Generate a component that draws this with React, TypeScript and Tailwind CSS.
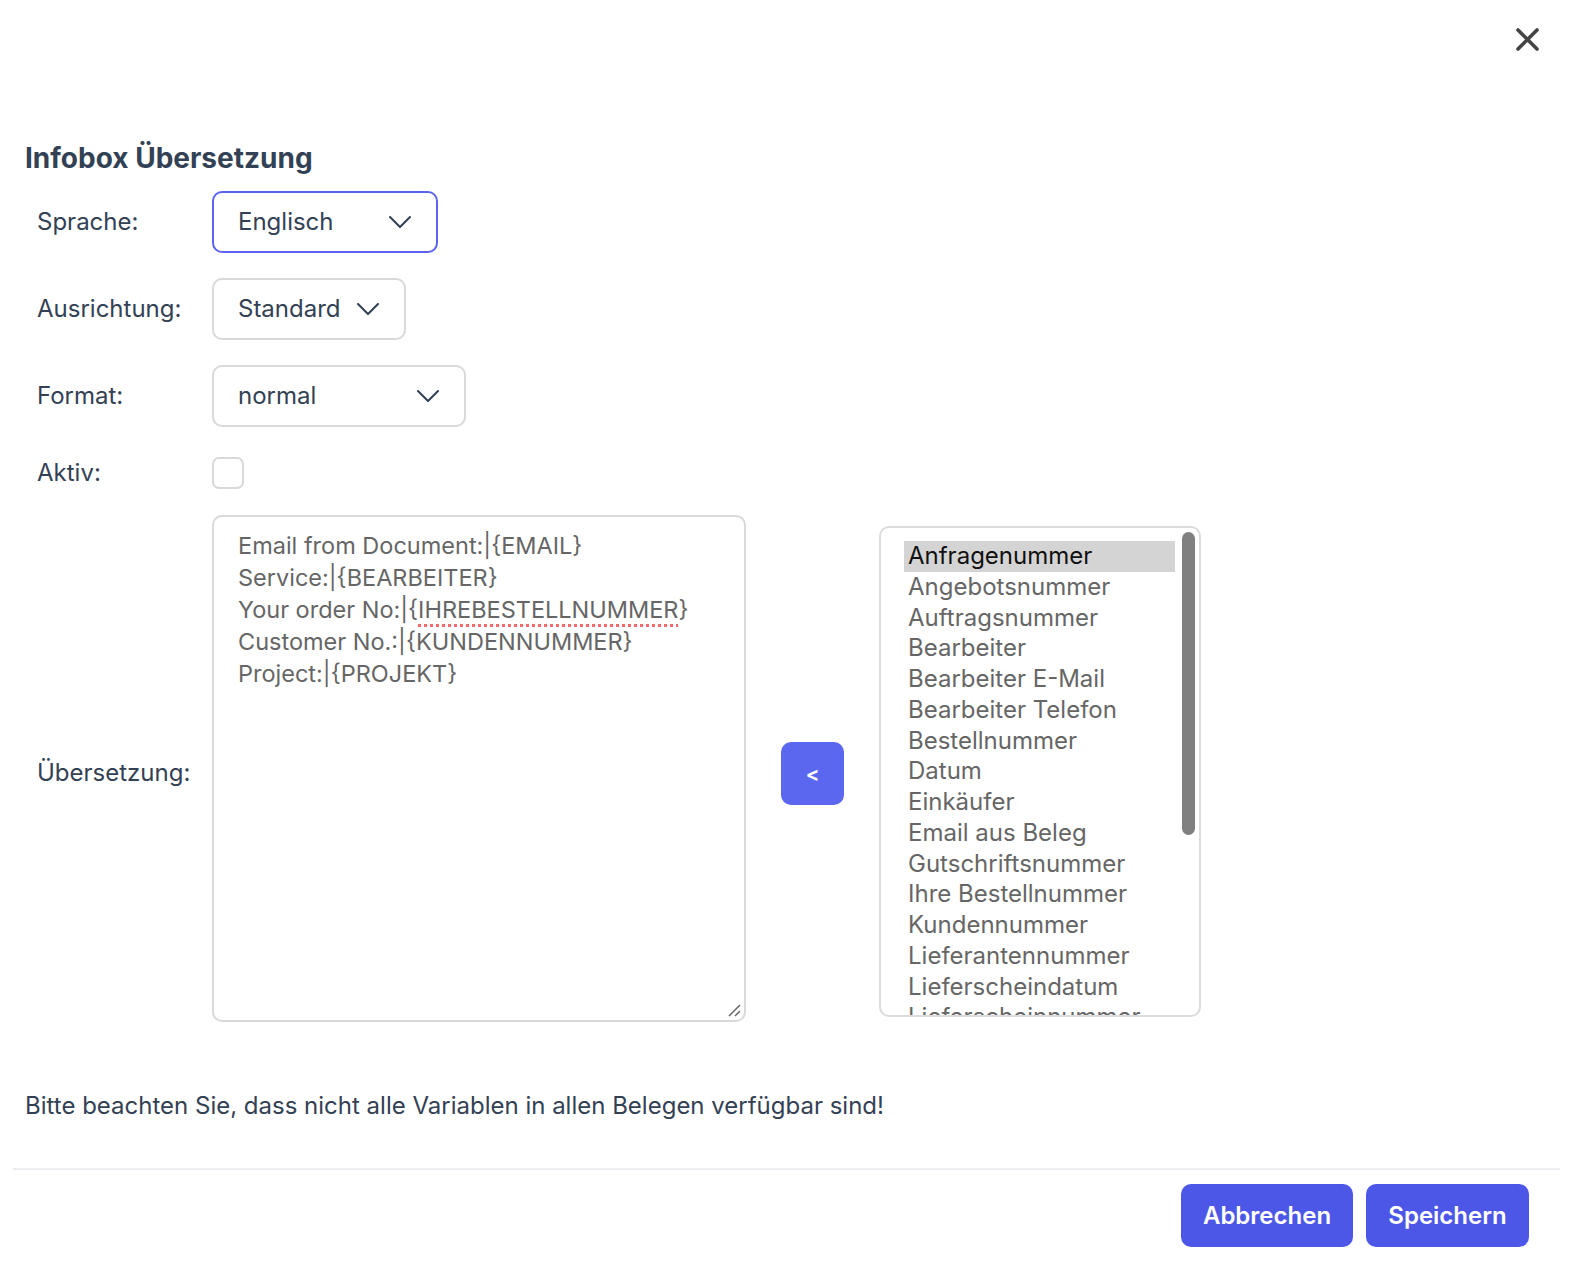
import React from 'react';

const Chevron = () => (
  <svg width="22" height="12" viewBox="0 0 22 12" fill="none" className="shrink-0">
    <path d="M1 1l10 10L21 1" stroke="#334155" strokeWidth="2" strokeLinecap="round" strokeLinejoin="round" />
  </svg>
);

const Select = ({ value, width, active }: { value: string; width: string; active?: boolean }) => (
  <div
    className={`${width} h-[62px] rounded-[10px] border-2 ${
      active ? 'border-[#5b63f0]' : 'border-[#d9d9d9]'
    } flex items-center justify-between pl-[24px] pr-[25px] text-[24px] text-[#334155]`}
  >
    <span>{value}</span>
    <Chevron />
  </div>
);

const Label = ({ children }: { children: React.ReactNode }) => (
  <div className="w-[212px] shrink-0 pl-[37px] text-[24px] leading-[30px] text-[#334155]">{children}</div>
);

export default function App() {
  const variables = [
    'Anfragenummer',
    'Angebotsnummer',
    'Auftragsnummer',
    'Bearbeiter',
    'Bearbeiter E-Mail',
    'Bearbeiter Telefon',
    'Bestellnummer',
    'Datum',
    'Einkäufer',
    'Email aus Beleg',
    'Gutschriftsnummer',
    'Ihre Bestellnummer',
    'Kundennummer',
    'Lieferantennummer',
    'Lieferscheindatum',
    'Lieferscheinnummer',
  ];

  return (
    <div className="w-[1582px] h-[1266px] bg-white font-['Inter',sans-serif] text-[#334155] overflow-hidden">
      {/* header */}
      <div className="h-[140px] flex justify-end items-start pt-[27px] pr-[42px]">
        <svg width="25" height="25" viewBox="0 0 25 25">
          <path d="M3 3l19 19M22 3L3 22" stroke="#444" strokeWidth="3.6" strokeLinecap="round" />
        </svg>
      </div>

      <h2 className="pl-[25px] text-[28px] leading-[36px] font-bold text-[#334155]">Infobox Übersetzung</h2>

      <div className="mt-[15px] flex flex-col">
        <div className="flex items-center">
          <Label>Sprache:</Label>
          <Select value="Englisch" width="w-[226px]" active />
        </div>
        <div className="mt-[25px] flex items-center">
          <Label>Ausrichtung:</Label>
          <Select value="Standard" width="w-[194px]" />
        </div>
        <div className="mt-[25px] flex items-center">
          <Label>Format:</Label>
          <Select value="normal" width="w-[254px]" />
        </div>
        <div className="mt-[30px] flex items-center">
          <Label>Aktiv:</Label>
          <div className="w-[32px] h-[32px] rounded-[7px] border-2 border-[#d9d9d9]" />
        </div>

        <div className="mt-[26px] flex items-start">
          <div className="mt-[243px]">
            <Label>Übersetzung:</Label>
          </div>
          <div className="relative w-[534px] h-[507px] rounded-[10px] border-2 border-[#d9d9d9] pl-[24px] pt-[13px] text-[23.5px] leading-[32px] text-[#666666] whitespace-pre">
            <div>Email from Document:|{'{EMAIL}'}</div>
            <div>Service:|{'{BEARBEITER}'}</div>
            <div>
              Your order No:|{'{'}
              <span className="underline decoration-dotted decoration-[#f26b6b] decoration-[3px] underline-offset-[6px]">
                IHREBESTELLNUMMER
              </span>
              {'}'}
            </div>
            <div>Customer No.:|{'{KUNDENNUMMER}'}</div>
            <div>Project:|{'{PROJEKT}'}</div>
            <svg className="absolute right-[3px] bottom-[3px]" width="14" height="14" viewBox="0 0 14 14">
              <path d="M2 13L13 2M8 13l5-5" stroke="#666" strokeWidth="1.5" />
            </svg>
          </div>

          <button className="mt-[227px] ml-[35px] w-[63px] h-[63px] rounded-[10px] bg-[#5c67f0] text-white text-[20px] font-bold flex items-center justify-center">
            &lt;
          </button>

          <div className="relative mt-[11px] ml-[35px] w-[322px] h-[491px] rounded-[10px] border-2 border-[#dcdcdc] overflow-hidden pt-[13px] pl-[23px] pr-[23px]">
            {variables.map((v, i) => (
              <div
                key={v}
                className={`h-[30.75px] leading-[30px] pl-[4px] text-[24px] whitespace-nowrap ${
                  i === 0 ? 'bg-[#d4d4d4] text-[#111111] w-[271px]' : 'text-[#666666]'
                }`}
              >
                {v}
              </div>
            ))}
            <div className="absolute top-[4px] right-[4px] w-[13px] h-[303px] rounded-full bg-[#808080]" />
          </div>
        </div>
      </div>

      <p className="mt-[69px] pl-[25px] text-[24px] leading-[30px] text-[#334155]">
        Bitte beachten Sie, dass nicht alle Variablen in allen Belegen verfügbar sind!
      </p>

      <div className="mt-[47px] ml-[13px] mr-[22px] h-[2px] bg-[#ececf1]" />

      <div className="mt-[14px] flex justify-end gap-[13px] pr-[53px]">
        <button className="w-[172px] h-[63px] rounded-[10px] bg-[#4c57e8] text-white text-[24px] font-semibold">
          Abbrechen
        </button>
        <button className="w-[163px] h-[63px] rounded-[10px] bg-[#4c57e8] text-white text-[24px] font-semibold">
          Speichern
        </button>
      </div>
    </div>
  );
}
